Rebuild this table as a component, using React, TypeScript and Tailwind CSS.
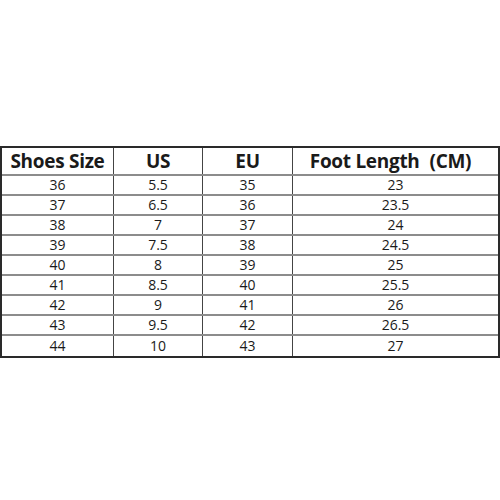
import React from "react";

const rows = [
  ["36", "5.5", "35", "23"],
  ["37", "6.5", "36", "23.5"],
  ["38", "7", "37", "24"],
  ["39", "7.5", "38", "24.5"],
  ["40", "8", "39", "25"],
  ["41", "8.5", "40", "25.5"],
  ["42", "9", "41", "26"],
  ["43", "9.5", "42", "26.5"],
  ["44", "10", "43", "27"],
];

const cols = "grid grid-cols-[112px_89px_90px_205px]";

export default function App() {
  return (
    <div
      className="w-[500px] h-[500px] bg-white pt-[146px] text-[#1a1a1a]"
      style={{ fontFamily: '"Open Sans", "Noto Sans", sans-serif' }}
    >
      <div className="w-[500px] border-2 border-[#2a2a2a]">
        <div className={`${cols} h-[28px] border-b-2 border-[#8c8c8c]`}>
          {["Shoes Size", "US", "EU"].map((h, i) => (
            <div
              key={i}
              className="flex items-center justify-center text-[19px] font-bold leading-none tracking-[-0.3px] border-r border-[#444]"
            >
              {h}
            </div>
          ))}
          <div className="flex items-center justify-center text-[19px] font-bold leading-none tracking-[-0.3px] pr-[10px]">
            <span>Foot Length</span>
            <span className="ml-[10px]">(CM)</span>
          </div>
        </div>
        {rows.map((r, ri) => (
          <div
            key={ri}
            className={`${cols} h-[20px] ${ri < rows.length - 1 ? "border-b-2 border-[#8c8c8c]" : ""}`}
          >
            {r.map((c, ci) => (
              <div
                key={ci}
                className={`flex items-center justify-center text-[14px] leading-none ${
                  ci < 3 ? "border-r border-[#444]" : ""
                }`}
              >
                {c}
              </div>
            ))}
          </div>
        ))}
      </div>
    </div>
  );
}
